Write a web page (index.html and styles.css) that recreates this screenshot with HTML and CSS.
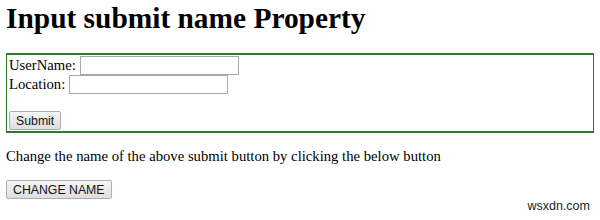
FILE: index.html
```html
<!DOCTYPE html>
<html lang="en">
  <head>
    <meta name="viewport" content="width=device-width, initial-scale=1.0" />
    <link rel="stylesheet" href="styles.css">
  </head>
  <body>
    <h1>Input submit name Property</h1>
    <form class="box">
      <div class="row">UserName: <input type="text" class="field" /></div>
      <div class="row">Location: <input type="text" class="field" /></div>
      <div class="spacer"></div>
      <input type="submit" class="btn" id="sub" value="Submit" />
    </form>
    <p class="note">Change the name of the above submit button by clicking the below button</p>
    <button class="btn" type="button">CHANGE NAME</button>
    <div class="mark">wsxdn.com</div>
  </body>
</html>
```

FILE: styles.css
```css
body {
  margin: 0 6px;
  font-family: "Liberation Serif", serif;
  font-size: 14.7px;
  color: #000;
  background: #fff;
}

h1 {
  font-size: 29.4px;
  margin: 2px 0 19px;
  line-height: 32px;
}

.box {
  margin: 0 -1px;
  border: 2px solid #2f7a2f;
  padding: 1px 2px;
}

.row {
  height: 19px;
  display: flex;
  align-items: center;
  gap: 4px;
}

.field {
  box-sizing: border-box;
  width: 159px;
  height: 19px;
  padding: 1px;
  border: 1px solid #a9a9a9;
  margin: 0;
}

.spacer {
  height: 17px;
}

.btn {
  box-sizing: border-box;
  font-family: "Liberation Sans", sans-serif;
  font-size: 12.3px;
  color: #111;
  height: 19px;
  padding: 0 6px;
  margin: 0;
  border: 1px solid #adadad;
  border-radius: 2px;
  background: linear-gradient(#f6f6f6, #dedede);
  vertical-align: top;
}

.note {
  margin: 15px 0 15px;
  line-height: 17px;
}

.mark {
  position: absolute;
  right: 10px;
  bottom: 7px;
  font-family: "Liberation Sans", sans-serif;
  font-size: 12.5px;
  color: #222;
}
```
